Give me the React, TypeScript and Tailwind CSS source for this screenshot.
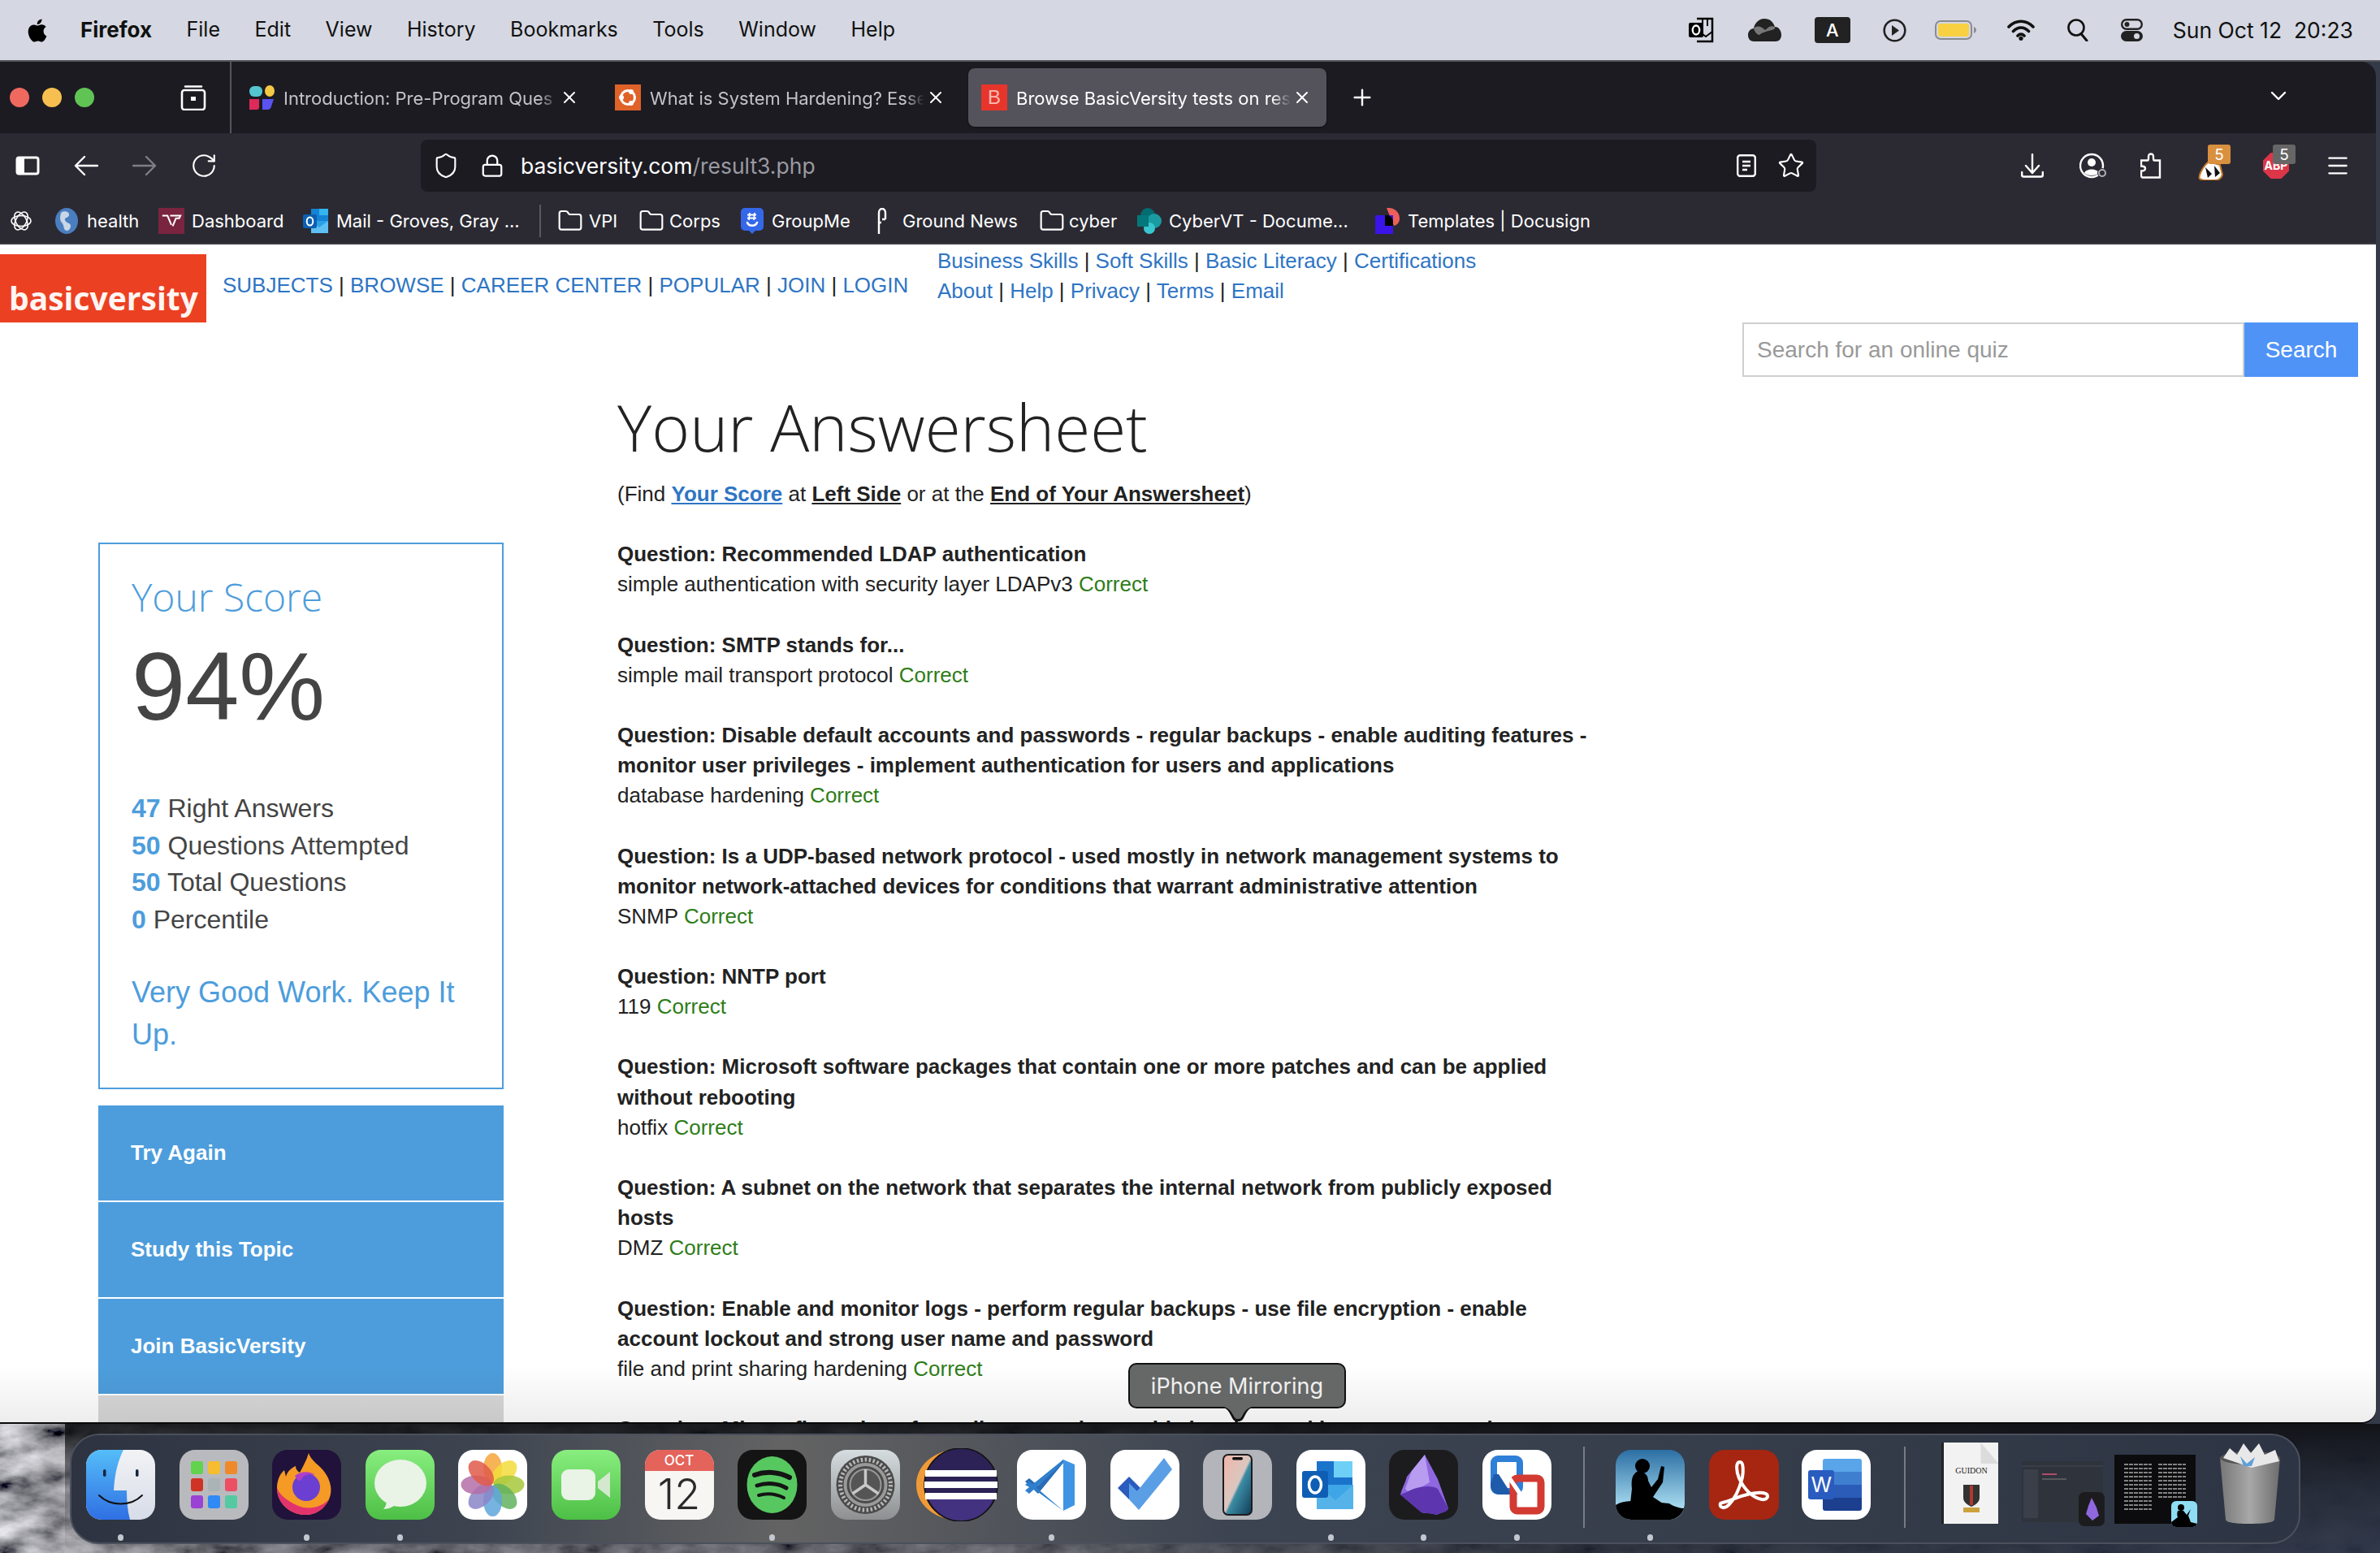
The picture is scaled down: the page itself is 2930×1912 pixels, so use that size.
import React from "react";
import { Shield, Lock, Star, Plus, X, ChevronDown, Folder, Menu, RotateCw } from "lucide-react";

const questions: [string, string][] = [
  ["Question: Recommended LDAP authentication", "simple authentication with security layer LDAPv3"],
  ["Question: SMTP stands for...", "simple mail transport protocol"],
  ["Question: Disable default accounts and passwords - regular backups - enable auditing features - monitor user privileges - implement authentication for users and applications", "database hardening"],
  ["Question: Is a UDP-based network protocol - used mostly in network management systems to monitor network-attached devices for conditions that warrant administrative attention", "SNMP"],
  ["Question: NNTP port", "119"],
  ["Question: Microsoft software packages that contain one or more patches and can be applied without rebooting", "hotfix"],
  ["Question: A subnet on the network that separates the internal network from publicly exposed hosts", "DMZ"],
  ["Question: Enable and monitor logs - perform regular backups - use file encryption - enable account lockout and strong user name and password", "file and print sharing hardening"],
];

function Sep() {
  return <span className="text-[#222]"> | </span>;
}
function L({ children }: { children: React.ReactNode }) {
  return <a className="text-[#2e75c4]">{children}</a>;
}

function MenuBar() {
  return (
    <div className="h-[76px] shrink-0 bg-[#d5d8e2] border-b-2 border-b-[#55565c] flex items-center text-[#111] font-['Inter',sans-serif] text-[25px]">
      <svg viewBox="0 0 26 31" className="ml-[32px] w-[26px] h-[31px] mr-[41px]"><path fill="#000" d="M21.6 16.4c0-3.5 2.9-5.2 3-5.3-1.6-2.4-4.2-2.7-5-2.8-2.2-.2-4.2 1.3-5.3 1.3-1.1 0-2.8-1.3-4.6-1.2-2.4 0-4.6 1.4-5.8 3.500-2.500 4.300-.6 10.700 1.800 14.200 1.200 1.700 2.600 3.600 4.400 3.500 1.800-.1 2.400-1.100 4.600-1.100 2.100 0 2.700 1.100 4.600 1.100 1.900 0 3.100-1.700 4.200-3.400 1.300-2 1.900-3.900 1.900-4-.1 0-3.800-1.400-3.800-5.800zM18 5.900c1-1.200 1.600-2.800 1.500-4.500-1.400.1-3.200 1-4.200 2.200-.9 1-1.700 2.700-1.500 4.300 1.600.1 3.200-.8 4.200-2z"/></svg>
      <div className="flex gap-[42.500px] leading-none">
        <span className="font-bold text-[26px]">Firefox</span>
        <span>File</span><span>Edit</span><span>View</span><span>History</span><span>Bookmarks</span><span>Tools</span><span>Window</span><span>Help</span>
      </div>
      <div className="ml-auto mr-[33px] flex items-center">
        <svg viewBox="0 0 32 32" className="w-[32px] h-[32px]"><path d="M11 2h19v28H11" fill="none" stroke="#000" strokeWidth="2.500"/><path d="M14 18l8 6 8-6M18 3v8M24 3v8" fill="none" stroke="#000" strokeWidth="2"/><rect x="1" y="7" width="18" height="18" rx="2" fill="#000"/><ellipse cx="10" cy="16" rx="4.200" ry="5.500" fill="none" stroke="#fff" strokeWidth="2.400"/></svg>
        <svg viewBox="0 0 41 28" className="ml-[42px] w-[41px] h-[28px]"><path d="M7 28C2 28 0 24 0 20s3-8 7-8c1-6 6-12 13-12s11 4 13 10c5 0 8 5 8 10 0 5-3 8-7 8z" fill="#222"/><path d="M7 12c4-5 10-2 14 2l5-4c2-1 5-1 7 0 1 1-1 4-4 4-7 2-12 3-15 6-3 0-6-4-7-8z" fill="#777"/></svg>
        <div className="ml-[41px] w-[44px] h-[32px] rounded-[4px] bg-[#222] text-white flex items-center justify-center text-[22px] font-medium leading-none">A</div>
        <svg viewBox="0 0 29 29" className="ml-[40px] w-[29px] h-[29px]"><circle cx="14.500" cy="14.500" r="12.800" fill="none" stroke="#222" strokeWidth="2.600"/><path d="M11 8l9 6.500-9 6.500z" fill="#222"/></svg>
        <svg viewBox="0 0 51 24" className="ml-[35px] w-[51px] h-[24px]"><rect x="1" y="1" width="44" height="22" rx="6" fill="none" stroke="#8a8b90" strokeWidth="2"/><rect x="4" y="4" width="38" height="16" rx="3.500" fill="#f8d041"/><path d="M48 8c2 1 3 2.500 3 4s-1 3-3 4z" fill="#8a8b90"/></svg>
        <svg viewBox="0 0 34 26" className="ml-[38px] w-[34px] h-[26px]"><path d="M2 9c9-9 21-9 30 0M7.500 14.500c6-6 13-6 19 0M13 20c2.500-2.500 5.500-2.500 8 0" fill="none" stroke="#111" strokeWidth="3.600" strokeLinecap="round"/><circle cx="17" cy="23.300" r="2.600" fill="#111"/></svg>
        <svg viewBox="0 0 26 28" className="ml-[40px] w-[26px] h-[28px]"><circle cx="11" cy="11" r="9.500" fill="none" stroke="#111" strokeWidth="2.600"/><path d="M17 18.500l7 8.500" stroke="#111" strokeWidth="3" strokeLinecap="round"/></svg>
        <svg viewBox="0 0 27 28" className="ml-[40px] w-[27px] h-[28px]"><rect x="1.200" y="1.200" width="24.600" height="11.500" rx="5.700" fill="none" stroke="#222" strokeWidth="2.400"/><circle cx="7.500" cy="7" r="3" fill="#222"/><rect x="0" y="15" width="27" height="13" rx="6.500" fill="#222"/><circle cx="19.500" cy="21.500" r="3.500" fill="#d5d8e2"/></svg>
        <span className="ml-[37px] whitespace-pre text-[26.500px] leading-none">Sun Oct 12  20:23</span>
      </div>
    </div>
  );
}

function Tab({ label, icon, active }: { label: string; icon: React.ReactNode; active?: boolean }) {
  return (
    <div className={active ? "w-[441px] h-[72px] rounded-[8px] bg-[#54525b] shadow-[0_1px_3px_rgba(0,0,0,0.5)] flex items-center pl-[16px]" : "w-[441px] h-[72px] rounded-[8px] flex items-center pl-[16px]"}>
      <div className="w-[32px] h-[32px] shrink-0">{icon}</div>
      <span className={active ? "ml-[11px] mt-[2px] w-[338px] overflow-hidden whitespace-nowrap text-[22px] text-white [mask-image:linear-gradient(to_right,black_93%,transparent)]" : "ml-[11px] mt-[2px] w-[338px] overflow-hidden whitespace-nowrap text-[22px] text-[#c2c2c8] [mask-image:linear-gradient(to_right,black_93%,transparent)]"}>{label}</span>
      <X size={24} strokeWidth={2} className="ml-[2px] text-white shrink-0" />
    </div>
  );
}

function TabBar() {
  return (
    <div className="h-[88px] shrink-0 bg-[#1c1b22] flex items-center font-['Inter',sans-serif]">
      <div className="ml-[12px] w-[24px] h-[24px] rounded-full bg-[#f0695f]" />
      <div className="ml-[16px] w-[24px] h-[24px] rounded-full bg-[#f6bf4f]" />
      <div className="ml-[16px] w-[24px] h-[24px] rounded-full bg-[#60c454]" />
      <svg viewBox="0 0 32 32" className="ml-[106px] w-[32px] h-[32px]"><path d="M6 2.500h20" stroke="#fff" strokeWidth="2.400" strokeLinecap="round"/><rect x="2" y="7" width="28" height="24" rx="3" fill="none" stroke="#fff" strokeWidth="2.600"/><rect x="13" y="15" width="6" height="5" fill="#fff"/></svg>
      <div className="ml-[29px] w-[2px] h-[88px] bg-[#55555c]" />
      <div className="ml-[5px] flex gap-[10px]">
        <Tab label="Introduction: Pre-Program Ques" icon={<svg viewBox="0 0 32 32"><rect x="1" y="2" width="16" height="13" rx="6" fill="#54c6d0"/><ellipse cx="26" cy="8" rx="6" ry="7" fill="#f6c945"/><path d="M1 18h12v10a3 3 0 0 1-3 3H1z" fill="#dd2a5b"/><path d="M17 18h14l-3 9a5 5 0 0 1-5 4h-6z" fill="#5a53f2"/></svg>} />
        <Tab label="What is System Hardening? Esse" icon={<svg viewBox="0 0 32 32"><rect width="32" height="32" fill="#df6229"/><circle cx="16" cy="16" r="8.500" fill="none" stroke="#fff" strokeWidth="3"/><circle cx="8" cy="16" r="3" fill="#fff"/><circle cx="20" cy="9" r="3" fill="#fff"/><circle cx="20" cy="23" r="3" fill="#fff"/></svg>} />
        <Tab active label="Browse BasicVersity tests on res" icon={<div className="w-[32px] h-[32px] bg-[#e8352b] text-[#f9b9b2] flex items-center justify-center text-[24px] leading-none font-['Liberation_Sans',sans-serif]">B</div>} />
      </div>
      <Plus size={32} strokeWidth={1.800} className="ml-[28px] text-white" />
      <ChevronDown size={32} strokeWidth={1.800} className="ml-auto mr-[104px] -mt-[4px] text-white" />
    </div>
  );
}

function NavBar() {
  return (
    <div className="h-[80px] shrink-0 bg-[#2b2a33] flex items-center text-white font-['Inter',sans-serif]">
      <svg viewBox="0 0 30 24" className="ml-[19px] w-[30px] h-[24px]"><rect x="2" y="2" width="26" height="20" rx="2.500" fill="none" stroke="#fff" strokeWidth="3"/><rect x="2" y="2" width="9" height="20" fill="#fff"/></svg>
      <svg viewBox="0 0 30 26" className="ml-[42px] w-[30px] h-[26px]"><path d="M29 13H3M13 2L2 13l11 11" fill="none" stroke="#fff" strokeWidth="2.400" strokeLinecap="round" strokeLinejoin="round"/></svg>
      <svg viewBox="0 0 30 26" className="ml-[42px] w-[30px] h-[26px]"><path d="M1 13h26M17 2l11 11-11 11" fill="none" stroke="#7f7e85" strokeWidth="2.400" strokeLinecap="round" strokeLinejoin="round"/></svg>
      <RotateCw size={34} strokeWidth={1.500} className="ml-[41px]" />
      <div className="ml-[250px] w-[1718px] h-[64px] rounded-[8px] bg-[#1c1b22] flex items-center">
        <Shield size={34} strokeWidth={1.500} className="ml-[14px]" />
        <Lock size={30} strokeWidth={1.800} className="ml-[25px]" />
        <span className="ml-[20px] mt-[1px] text-[26.500px] leading-none"><span>basicversity.com</span><span className="text-[#9a9aa0]">/result3.php</span></span>
        <svg viewBox="0 0 24 28" className="ml-auto w-[24px] h-[28px]"><rect x="1.200" y="1.200" width="21.600" height="25.600" rx="3" fill="none" stroke="#fff" strokeWidth="2.400"/><path d="M7 9h10M7 14h10M7 19h6" stroke="#fff" strokeWidth="2.400"/></svg>
        <Star size={34} strokeWidth={1.500} className="ml-[26px] mr-[14px]" />
      </div>
      <svg viewBox="0 0 28 30" className="ml-[252px] w-[28px] h-[30px]"><path d="M14 1v23M6 15l8 9 8-9M1.200 23v3.500a2 2 0 0 0 2 2h21.600a2 2 0 0 0 2-2V23" fill="none" stroke="#fff" strokeWidth="2.400" strokeLinecap="round" strokeLinejoin="round"/></svg>
      <svg viewBox="0 0 34 32" className="ml-[44px] w-[34px] h-[32px]"><circle cx="15" cy="16" r="14" fill="none" stroke="#fff" strokeWidth="2.400"/><circle cx="15" cy="12" r="5" fill="#fff"/><path d="M6 25c2-6 16-6 18 0-4 4-14 4-18 0z" fill="#fff"/><circle cx="28" cy="25" r="6" fill="#2b2a33"/><circle cx="28" cy="25" r="4" fill="none" stroke="#b0b0b5" strokeWidth="2"/></svg>
      <svg viewBox="0 0 26 32" className="ml-[41px] w-[26px] h-[32px]"><path d="M13 1.500c3 0 3 2 3 5 0 2 0 3 1 3h7v21H3c-1 0-2-1-2-2v-6c3 0 5-1 5-3s-2-3-5-3v-7h8c1 0 1-1 1-3 0-3 0-5 3-5z" fill="none" stroke="#fff" strokeWidth="2.400"/></svg>
      <div className="ml-[45px] relative w-[32px] h-[32px]">
        <svg viewBox="0 0 32 26" className="absolute top-[8px] left-0 w-[32px] h-[26px]"><path d="M2 24c-2-3 3-12 7-17l4-4 14 4 3 12c-1 3-4 7-10 7-6 0-14 1-18-2z" fill="#fff" stroke="#c47a28" strokeWidth="2"/><path d="M9 10l8 8-5 5z" fill="#111"/><path d="M20 8l7 9-6 5z" fill="#111"/></svg>
        <div className="absolute -top-[10px] left-[12px] w-[28px] h-[24px] rounded-[3px] bg-[#d9903f] text-white flex items-center justify-center text-[19px] leading-none">5</div>
      </div>
      <div className="ml-[48px] relative w-[32px] h-[32px]">
        <div className="absolute inset-0 bg-[#dc3648] [clip-path:polygon(30%_0,70%_0,100%_30%,100%_70%,70%_100%,30%_100%,0_70%,0_30%)] flex items-center justify-center text-[14px] font-bold leading-none text-white">ABP</div>
        <div className="absolute -top-[10px] left-[12px] w-[28px] h-[24px] rounded-[3px] bg-[#666] text-white flex items-center justify-center text-[19px] leading-none">5</div>
      </div>
      <Menu size={32} strokeWidth={1.700} className="ml-[44px]" />
    </div>
  );
}

function FolderIcon() {
  return <Folder size={32} strokeWidth={1.600} className="text-white shrink-0" />;
}

function OutlookMini() {
  return (
    <svg viewBox="0 0 32 32" className="w-[32px] h-[32px] shrink-0"><rect x="10" y="1" width="21" height="16" fill="#1583d6"/><rect x="20" y="1" width="11" height="8" fill="#36b4f0"/><path d="M10 16h21v15H10z" fill="#2aa0e8"/><path d="M10 16l10 8 11-8v15H10z" fill="#5ec0f2"/><rect x="0" y="8" width="17" height="17" rx="2" fill="#0b5fb3"/><ellipse cx="8.500" cy="16.500" rx="3.800" ry="5" fill="none" stroke="#fff" strokeWidth="2"/></svg>
  );
}

function Bookmarks() {
  return (
    <div className="h-[57px] shrink-0 bg-[#2b2a33] border-b-2 border-b-[#3c3b44] flex items-center text-white text-[22px] font-['Inter',sans-serif] leading-none whitespace-nowrap">
      <svg viewBox="0 0 26 30" className="ml-[13px] w-[26px] h-[30px] shrink-0"><g fill="none" stroke="#fff" strokeWidth="1.500"><ellipse cx="13" cy="15" rx="12" ry="6.500" /><ellipse cx="13" cy="15" rx="12" ry="6.500" transform="rotate(60 13 15)" /><ellipse cx="13" cy="15" rx="12" ry="6.500" transform="rotate(120 13 15)" /></g></svg>
      <svg viewBox="0 0 28 32" className="ml-[29px] w-[28px] h-[32px] shrink-0"><ellipse cx="14" cy="16" rx="14" ry="16" fill="#4a7ec0"/><path d="M8 5c4-2 10 0 9 4s-6 2-5 6 8 3 7 8-5 6-7 4-1-6-4-9-2-11 0-13z" fill="#c9d6e6"/></svg>
      <span className="ml-[11px] w-[88px]">health</span>
      <div className="w-[32px] h-[32px] bg-[#7a2440] shrink-0 flex items-center justify-center"><svg viewBox="0 0 32 20" className="w-[26px] h-[16px]"><path d="M2 2h8l6 14M14 2h16l-2 4h-5l-5 12" fill="none" stroke="#fff" strokeWidth="2.500"/></svg></div>
      <span className="ml-[9px] w-[137px]">Dashboard</span>
      <OutlookMini />
      <span className="ml-[9px] w-[250px]">Mail - Groves, Gray ...</span>
      <div className="w-[2px] h-[40px] bg-[#5a5961] shrink-0" />
      <div className="ml-[20px] flex items-center w-[100px]"><FolderIcon /><span className="ml-[7px]">VPI</span></div>
      <div className="flex items-center w-[126px]"><FolderIcon /><span className="ml-[6px]">Corps</span></div>
      <svg viewBox="0 0 28 32" className="w-[28px] h-[32px] shrink-0"><path d="M5 0h18a5 5 0 0 1 5 5v18a5 5 0 0 1-5 5h-5l-4 4-4-4H5a5 5 0 0 1-5-5V5a5 5 0 0 1 5-5z" fill="#3568e8"/><path d="M8 18c2 5 10 5 12 0" fill="none" stroke="#fff" strokeWidth="2.600" strokeLinecap="round"/><path d="M11 6l-1 9M17 6l-1 9M8 8.500h11M8 12.500h11" stroke="#fff" strokeWidth="1.800"/></svg>
      <span className="ml-[10px] w-[130px]">GroupMe</span>
      <svg viewBox="0 0 12 32" className="w-[12px] h-[32px] shrink-0"><path d="M2 32V6c0-3 2-5 4-5s4 2 4 5v8M6 14h4M2 18h3" fill="none" stroke="#fff" strokeWidth="2.400"/></svg>
      <span className="ml-[19px] w-[168px]">Ground News</span>
      <div className="flex items-center w-[121px]"><FolderIcon /><span className="ml-[5px]">cyber</span></div>
      <svg viewBox="0 0 30 32" className="w-[30px] h-[32px] shrink-0"><circle cx="13" cy="9" r="9" fill="#036c70"/><circle cx="21" cy="16" r="9" fill="#1a9ba1"/><circle cx="15" cy="25" r="7" fill="#37c6d0"/><rect x="0" y="9" width="14" height="14" fill="#04777b"/></svg>
      <span className="ml-[9px] w-[254px]">CyberVT - Docume...</span>
      <svg viewBox="0 0 32 32" className="w-[32px] h-[32px] shrink-0"><path d="M14 0h3a13 13 0 0 1 13 13c0 5-3 8-7 9L14 0z" fill="#ee5f5b"/><rect x="0" y="9" width="22" height="23" fill="#3a14e8"/><path d="M12 9h4a9 9 0 0 1 6 8v5H12z" fill="#000"/></svg>
      <span className="ml-[8px]">Templates | Docusign</span>
    </div>
  );
}

function Page() {
  return (
    <div className="relative flex-1 min-h-0 bg-white overflow-hidden font-['Liberation_Sans',sans-serif] text-[26px] leading-[37.140px] text-[#222]">
      <div className="h-[96px] flex items-start">
        <div className="mt-[12px] w-[254px] h-[84px] bg-[#ec4023] flex items-end pl-[11px] pb-[2px] font-['Open_Sans',sans-serif] font-bold text-[39px] leading-[56px] text-[#fff5f2]">basicversity</div>
        <div className="ml-[20px] mt-[32px] w-[880px] whitespace-nowrap"><L>SUBJECTS</L><Sep /><L>BROWSE</L><Sep /><L>CAREER CENTER</L><Sep /><L>POPULAR</L><Sep /><L>JOIN</L><Sep /><L>LOGIN</L></div>
        <div className="mt-[2px] whitespace-nowrap">
          <div><L>Business Skills</L><Sep /><L>Soft Skills</L><Sep /><L>Basic Literacy</L><Sep /><L>Certifications</L></div>
          <div><L>About</L><Sep /><L>Help</L><Sep /><L>Privacy</L><Sep /><L>Terms</L><Sep /><L>Email</L></div>
        </div>
      </div>
      <div className="h-[67px] flex justify-end pr-[22px]">
        <input readOnly placeholder="Search for an online quiz" className="w-[618px] h-[67px] border-2 border-[#cfcfcf] pl-[16px] text-[28px] placeholder:text-[#999] outline-none" />
        <div className="w-[140px] h-[67px] bg-[#4f93f7] text-white text-[28px] flex items-center justify-center">Search</div>
      </div>
      <div className="flex">
        <div className="ml-[121px] mt-[204px] w-[499px] shrink-0">
          <div className="h-[673px] border-2 border-[#4d9ddc] pl-[39px]">
            <div className="mt-[30px] font-['Open_Sans',sans-serif] font-light text-[48px] leading-[70px] text-[#4d9ddc]">Your Score</div>
            <div className="mt-[10px] text-[119px] leading-[130px] text-[#444]">94%</div>
            <div className="mt-[63px] text-[32px] leading-[45.700px] text-[#444]">
              <div><b className="text-[#4d9ddc]">47</b> Right Answers</div>
              <div><b className="text-[#4d9ddc]">50</b> Questions Attempted</div>
              <div><b className="text-[#4d9ddc]">50</b> Total Questions</div>
              <div><b className="text-[#4d9ddc]">0</b> Percentile</div>
            </div>
            <div className="mt-[40px] pr-[20px] text-[36px] leading-[52px] text-[#4d9ddc]">Very Good Work. Keep It Up.</div>
          </div>
          <div className="mt-[20px] h-[117px] bg-[#4d9ddc] pl-[40px] flex items-center font-bold text-white">Try Again</div>
          <div className="mt-[2px] h-[117px] bg-[#4d9ddc] pl-[40px] flex items-center font-bold text-white">Study this Topic</div>
          <div className="mt-[2px] h-[117px] bg-[#4d9ddc] pl-[40px] flex items-center font-bold text-white">Join BasicVersity</div>
          <div className="mt-[2px] h-[117px] bg-[#d8d8d8]" />
        </div>
        <div className="ml-[140px] w-[1215px]">
          <h1 className="mt-[11px] font-['Open_Sans',sans-serif] font-light text-[80px] leading-[100px] text-[#222]">Your Answersheet</h1>
          <p className="mt-[15px]">(Find <a className="font-bold underline text-[#2e75c4]">Your Score</a> at <a className="font-bold underline">Left Side</a> or at the <a className="font-bold underline">End of Your Answersheet</a>)</p>
          <div className="mt-[37px]">
            {questions.map(([q, a]) => (
              <div key={q} className="mb-[37.140px]">
                <div className="font-bold">{q}</div>
                <div>{a} <span className="text-[#2e7d18]">Correct</span></div>
              </div>
            ))}
            <div className="font-bold">Question: Misconfiguration of e-mail servers that enable it to be used by spammers to host</div>
          </div>
        </div>
      </div>
      <div className="absolute left-0 right-0 bottom-0 h-[70px] bg-gradient-to-b from-transparent to-[rgba(0,0,0,0.07)] pointer-events-none" />
    </div>
  );
}

function DockIcon({ children, dot }: { children: React.ReactNode; dot?: boolean }) {
  return (
    <div className="w-[85px] flex flex-col items-center">
      <div className="w-[85px] h-[86px] flex items-center justify-center">{children}</div>
      {dot ? <div className="mt-[18px] w-[7px] h-[8px] rounded-full bg-[#c3c7d0]" /> : null}
    </div>
  );
}

const svgC = "w-[85px] h-[86px] overflow-visible shrink-0";

function Dock() {
  return (
    <div className="relative flex-1 min-h-0">
      <svg className="absolute inset-0 w-full h-full" preserveAspectRatio="none" viewBox="0 0 2930 158">
        <defs>
          <filter id="rock" x="0" y="0" width="100%" height="100%">
            <feTurbulence type="fractalNoise" baseFrequency="0.018 0.035" numOctaves="5" seed="11" />
            <feColorMatrix values="1.300 0 0 0 -0.250  1.300 0 0 0 -0.250  1.350 0 0 0 -0.240  0 0 0 0 1" />
          </filter>
          <linearGradient id="tone" x1="0" x2="1" y1="0" y2="0">
            <stop offset="0" stopColor="#000" stopOpacity="0" />
            <stop offset="0.03" stopColor="#000" stopOpacity="0.15" />
            <stop offset="0.1" stopColor="#11131a" stopOpacity="0.4" />
            <stop offset="0.4" stopColor="#15181f" stopOpacity="0.5" />
            <stop offset="0.65" stopColor="#1a1f2b" stopOpacity="0.85" />
            <stop offset="1" stopColor="#2b3345" stopOpacity="0.95" />
          </linearGradient>
          <linearGradient id="top" x1="0" x2="0" y1="0" y2="1">
            <stop offset="0" stopColor="#0c0d10" stopOpacity="0.85" />
            <stop offset="0.5" stopColor="#0c0d10" stopOpacity="0.3" />
            <stop offset="1" stopColor="#0c0d10" stopOpacity="0" />
          </linearGradient>
        </defs>
        <rect width="2930" height="158" filter="url(#rock)" />
        <rect width="2930" height="158" fill="url(#tone)" />
        <rect x="80" width="2850" height="158" fill="url(#top)" />
      </svg>
      <div className="relative ml-[86px] mt-[12px] w-[2746px] h-[136px] rounded-[36px] border-2 border-[#4b505c] bg-[linear-gradient(to_right,#2d3340,#3d4450_18%,#636363_32%,#3d4451_52%,#2d3544)] flex items-start pl-[18px] pt-[18px] gap-[29.600px]">
        <DockIcon dot>
          <svg viewBox="0 0 85 86" className={svgC}><defs><linearGradient id="fa" x1="0" y1="0" x2="0" y2="1"><stop offset="0" stopColor="#55bdf8"/><stop offset="1" stopColor="#2f6fe3"/></linearGradient><linearGradient id="fb" x1="0" y1="0" x2="0" y2="1"><stop offset="0" stopColor="#f2f3f5"/><stop offset="1" stopColor="#d7dce8"/></linearGradient></defs><rect width="85" height="86" rx="19" fill="url(#fb)"/><path d="M19 0h27c-7 14-11 30-12 50h16c0 13 1 25 4 36H19A19 19 0 0 1 0 67V19A19 19 0 0 1 19 0z" fill="url(#fa)"/><rect x="21" y="24" width="3.500" height="9" rx="1.700" fill="#16253f"/><rect x="61" y="24" width="3.500" height="9" rx="1.700" fill="#16253f"/><path d="M16 56c14 14 39 14 53 0" fill="none" stroke="#111" strokeWidth="2" strokeLinecap="round"/></svg>
        </DockIcon>
        <DockIcon>
          <svg viewBox="0 0 85 86" className={svgC}><rect width="85" height="86" rx="19" fill="#b9babe"/>{[["#62d24f",14,14],["#f5bd2f",35,14],["#ef8a2a",56,14],["#cf3325",14,35],["#aab3b5",35,35],["#ec4f63",56,35],["#9a42d4",14,56],["#2f8af5",35,56],["#55c9a2",56,56]].map(([c,x,y]) => <rect key={String(c)} x={Number(x)} y={Number(y)} width="15" height="16" rx="3" fill={String(c)} />)}</svg>
        </DockIcon>
        <DockIcon dot>
          <svg viewBox="0 0 85 86" className={svgC}><rect width="85" height="86" rx="19" fill="#20123a"/><path d="M45 4c3 10 14 15 20 24 7 10 10 22 5 33-6 13-18 20-31 19C22 79 6 66 6 47c0-10 4-18 9-22l2 8c2-7 7-11 12-13 0 4 2 6 5 8 3-6 8-14 11-24z" fill="#f59a25"/><path d="M6 47c0 19 16 32 33 33 13 1 25-6 31-19-10 10-26 14-40 7C17 62 9 55 6 47z" fill="#e2336e"/><circle cx="42" cy="46" r="17" fill="#6a3fd2"/><path d="M28 32c8-6 18-6 25-1-8-2-14 0-17 5-2 4-5 2-8-4z" fill="#b03fc7"/></svg>
        </DockIcon>
        <DockIcon dot>
          <svg viewBox="0 0 85 86" className={svgC}><defs><linearGradient id="gr" x1="0" y1="0" x2="0" y2="1"><stop offset="0" stopColor="#88ee7f"/><stop offset="1" stopColor="#4dbf45"/></linearGradient></defs><rect width="85" height="86" rx="19" fill="url(#gr)"/><ellipse cx="43" cy="41" rx="32" ry="29" fill="#e9f3e6"/><path d="M26 62c0 5-2 9-4 11 6 0 12-3 16-6z" fill="#e9f3e6"/></svg>
        </DockIcon>
        <DockIcon>
          <svg viewBox="0 0 85 86" className={svgC}><rect width="85" height="86" rx="19" fill="#fff"/>{[["#f4a63a",0],["#f3dc3b",45],["#a8c83c",90],["#61b25e",135],["#5fa6dc",180],["#8a86c8",225],["#b46fa8",270],["#e05a4a",315]].map(([c,r]) => <ellipse key={String(r)} cx="42.500" cy="23" rx="11.500" ry="19" fill={String(c)} fillOpacity="0.85" transform={`rotate(${r} 42.500 43)`} />)}</svg>
        </DockIcon>
        <DockIcon>
          <svg viewBox="0 0 85 86" className={svgC}><rect width="85" height="86" rx="19" fill="url(#gr)"/><rect x="12" y="24" width="42" height="38" rx="9" fill="#e9f3e6"/><path d="M57 39l15-12v32L57 47z" fill="#d3e8cf"/></svg>
        </DockIcon>
        <DockIcon>
          <div className="w-[85px] h-[86px] rounded-[19px] bg-[#f7f6f3] overflow-hidden flex flex-col items-center font-['Inter',sans-serif]">
            <div className="w-full h-[26px] bg-[#e4635a] text-white text-[17px] font-medium leading-[26px] text-center">OCT</div>
            <div className="text-[#2a2a2a] text-[52px] font-light leading-[58px]">12</div>
          </div>
        </DockIcon>
        <DockIcon dot>
          <svg viewBox="0 0 85 86" className={svgC}><rect width="85" height="86" rx="19" fill="#141414"/><ellipse cx="42.500" cy="43" rx="31" ry="35" fill="#57c860"/><g fill="none" stroke="#141414" strokeLinecap="round"><path d="M21 31c14-5 30-4 43 3" strokeWidth="6"/><path d="M24 44c12-4 26-3 36 3" strokeWidth="5"/><path d="M26 56c10-3 21-2 31 3" strokeWidth="4"/></g></svg>
        </DockIcon>
        <DockIcon>
          <svg viewBox="0 0 85 86" className={svgC}><defs><linearGradient id="sg" x1="0" y1="0" x2="0" y2="1"><stop offset="0" stopColor="#d6dde0"/><stop offset="1" stopColor="#8d8f90"/></linearGradient></defs><rect width="85" height="86" rx="19" fill="url(#sg)"/><circle cx="42.500" cy="43" r="36" fill="#4a4a4a"/><circle cx="42.500" cy="43" r="31" fill="none" stroke="#b5b5b5" strokeWidth="5" strokeDasharray="2.500 2.500"/><circle cx="42.500" cy="43" r="25" fill="none" stroke="#999" strokeWidth="4"/><circle cx="42.500" cy="43" r="19" fill="#555" stroke="#999" strokeWidth="2"/><path d="M42.500 43V24M42.500 43l-16 11M42.500 43l16 11" stroke="#c9c9c9" strokeWidth="3.500"/></svg>
        </DockIcon>
        <DockIcon>
          <svg viewBox="0 0 103 90" className="w-[103px] h-[90px] shrink-0"><path d="M48 1C20 4 0 22 0 45s20 41 48 44C25 85 10 68 10 45S25 5 48 1z" fill="#f09a37"/><circle cx="55" cy="45" r="45" fill="#2c2255" stroke="#111" strokeWidth="1.500"/><path d="M15 62h80c-6 16-22 27-40 27s-33-11-40-27z" fill="#43327f"/><rect x="11" y="27" width="88" height="8" fill="#fff"/><rect x="10" y="41" width="90" height="8" fill="#fff"/><rect x="11" y="55" width="88" height="8" fill="#fff"/></svg>
        </DockIcon>
        <DockIcon dot>
          <svg viewBox="0 0 85 86" className={svgC}><rect width="85" height="86" rx="19" fill="#fff"/><path d="M57 12l14 6v50l-14 7z" fill="#3f94e4"/><path d="M57 12L26 44 15 35l-5 4 16 15 31-38z" fill="#2a6cb5"/><path d="M10 50l5 4 42-38v-4zM57 75L15 39l-5 4 16 9 31 23z" fill="#2f7fcc"/></svg>
        </DockIcon>
        <DockIcon>
          <svg viewBox="0 0 85 86" className={svgC}><rect width="85" height="86" rx="19" fill="#fff"/><path d="M9 47l14-14 14 14-14 14z" fill="#2a5bbd"/><path d="M23 61l12 13 41-50-10-14-33 41-10-10z" fill="#5a9fe6"/></svg>
        </DockIcon>
        <DockIcon>
          <svg viewBox="0 0 85 86" className={svgC}><defs><linearGradient id="ph" x1="0" y1="0" x2="1" y2="1"><stop offset="0" stopColor="#f2b5a8"/><stop offset="0.5" stopColor="#d9c7c0"/><stop offset="0.55" stopColor="#3d8ca5"/><stop offset="1" stopColor="#0e3a55"/></linearGradient></defs><rect width="85" height="86" rx="19" fill="#b3b5ba"/><rect x="25" y="6" width="35" height="74" rx="6" fill="url(#ph)" stroke="#1c1c1e" strokeWidth="2"/><rect x="36" y="9" width="13" height="3.500" rx="1.700" fill="#111"/></svg>
        </DockIcon>
        <DockIcon dot>
          <svg viewBox="0 0 85 86" className={svgC}><rect width="85" height="86" rx="19" fill="#fff"/><rect x="25" y="14" width="44" height="33" fill="#1a74cc"/><rect x="46" y="14" width="23" height="20" fill="#6fd0f7"/><path d="M25 43h45v30H25z" fill="#3ea6e6"/><path d="M25 43l23 19 22-19v30H25z" fill="#55b3ea"/><rect x="7" y="26" width="32" height="33" rx="3" fill="#0f5eb5"/><ellipse cx="23" cy="43" rx="7.500" ry="10" fill="none" stroke="#fff" strokeWidth="3.500"/></svg>
        </DockIcon>
        <DockIcon dot>
          <svg viewBox="0 0 85 86" className={svgC}><rect width="85" height="86" rx="19" fill="#1c1c1e"/><path d="M44 6L60 36l13 36c-1 4-10 6-15 8-7-3-14-1-18-3L14 55c2-8 6-14 8-22z" fill="#8f68e0"/><path d="M44 6l6 34-24 14-6-6 8-22z" fill="#b79cf0"/><path d="M22 52c10-6 28-10 38-4l13 24c-1 4-10 6-15 8-7-3-14-1-18-3L14 55z" fill="#5d35ae"/></svg>
        </DockIcon>
        <DockIcon dot>
          <svg viewBox="0 0 85 86" className={svgC}><rect width="85" height="86" rx="19" fill="#fff"/><rect x="14" y="11" width="32" height="40" rx="5" fill="none" stroke="#2f7fd8" strokeWidth="8"/><path d="M10 42c0 8 4 13 12 13h14L20 30h-6z" fill="#1f5bab"/><rect x="38" y="35" width="34" height="40" rx="5" fill="none" stroke="#d33a32" strokeWidth="9"/><path d="M28 27l23 34" stroke="#fff" strokeWidth="5"/></svg>
        </DockIcon>
        <div className="w-[2px] h-[100px] -mt-[4px] mx-[9px] bg-[#777b84]" />
        <DockIcon dot>
          <svg viewBox="0 0 85 86" className={svgC}><defs><linearGradient id="kd" x1="0" y1="0" x2="0" y2="1"><stop offset="0" stopColor="#2c6fa4"/><stop offset="1" stopColor="#c2f2ff"/></linearGradient></defs><rect width="85" height="86" rx="19" fill="url(#kd)"/><circle cx="33" cy="20" r="9" fill="#000"/><path d="M26 27c8-1 14 3 14 11l4 8 8-10 4-16 4 1-2 19-12 18 18 12-24 2-22-6 2-18c-1-10 0-17 6-21z" fill="#000"/><path d="M0 68c10-6 18-4 24-6l42 4c6 4 14 6 19 6v-5a19 19 0 0 1 0 0c0 10-9 19-19 19H19A19 19 0 0 1 0 67z" fill="#000"/></svg>
        </DockIcon>
        <DockIcon>
          <svg viewBox="0 0 85 86" className={svgC}><rect width="86" height="86" rx="19" fill="#a62612"/><path d="M14 66c-2 4 4 8 10 2 8-8 14-22 17-34 1-6 2-19-3-19-6 0-4 13-1 20 6 13 16 24 28 26 7 1 9-5 5-7-9-4-30 2-44 8-6 3-10 2-12 4z" fill="none" stroke="#fff" strokeWidth="4"/></svg>
        </DockIcon>
        <DockIcon>
          <div className="w-[85px] h-[86px] shrink-0 rounded-[19px] bg-white flex items-center justify-center relative">
            <div className="ml-[14px] w-[48px] h-[64px] rounded-[3px] overflow-hidden flex flex-col">
              <div className="h-1/4 bg-[#5aa5ea]" /><div className="h-1/4 bg-[#3f7fd0]" /><div className="h-1/4 bg-[#2a5cb8]" /><div className="h-1/4 bg-[#1c3f8f]" />
            </div>
            <div className="absolute left-[8px] top-[25px] w-[32px] h-[36px] rounded-[3px] bg-[#2a5cc0] text-white text-[26px] leading-[36px] text-center font-['Inter',sans-serif]">W</div>
          </div>
        </DockIcon>
        <div className="w-[2px] h-[100px] -mt-[4px] mx-[11px] bg-[#777b84]" />
        <div className="ml-[4px] -mt-[9px] relative w-[70px] h-[100px] shrink-0 bg-[#f2f2f2] border-l-[3px] border-l-[#222] flex flex-col items-center text-[#222] font-['Liberation_Serif',serif] text-[9px] leading-none pt-[30px]">
          <div className="absolute right-0 top-0 w-[22px] h-[26px] bg-[#dcdcdc] [clip-path:polygon(0_0,100%_100%,0_100%)]" />
          <span className="text-[10px]">GUIDON</span>
          <svg viewBox="0 0 24 30" className="mt-[10px] w-[24px] h-[30px]"><path d="M2 2h20v16c0 6-6 9-10 11C8 27 2 24 2 18z" fill="#333"/><rect x="10" y="3" width="4" height="24" fill="#b0392e"/></svg>
          <div className="w-[20px] h-[6px] bg-[#cba23e]" />
        </div>
        <div className="-ml-[1px] mt-[14px] relative w-[100px] h-[75px] shrink-0 bg-[#2e333c]">
          <svg viewBox="0 0 100 75" className="w-[100px] h-[75px]"><path d="M0 6h100" stroke="#454a54" strokeWidth="1"/><rect x="2" y="10" width="18" height="60" fill="#3a3f4a"/><path d="M25 16h18" stroke="#b34a6b" strokeWidth="2"/><path d="M25 22h30" stroke="#666" strokeWidth="1.500"/></svg>
          <div className="absolute -right-[2px] bottom-[-5px] w-[32px] h-[42px] rounded-[7px] bg-[#1c1c1e] flex items-center justify-center"><svg viewBox="0 0 20 30" className="w-[20px] h-[30px]"><path d="M10 1l6 12 3 10-8 6-8-8 3-10z" fill="#8f68e0"/></svg></div>
        </div>
        <div className="mt-[6px] -ml-[16px] relative w-[100px] h-[85px] shrink-0 bg-[#0c0c0e]">
          <svg viewBox="0 0 100 85" className="w-[100px] h-[85px]"><g stroke="#aaa" strokeWidth="1.500" strokeDasharray="5 1"><path d="M12 12h34M12 17h34M12 22h34M12 27h34M12 32h34M12 37h34M12 42h34M12 47h34M12 52h34M12 57h34M12 62h34M12 67h34"/><path d="M54 12h34M54 17h34M54 22h34M54 27h34M54 32h34M54 37h34M54 42h34M54 47h34M54 52h34"/></g></svg>
          <div className="absolute right-[-2px] bottom-[-4px] w-[32px] h-[32px] rounded-[6px] bg-[#8fdcf5] overflow-hidden"><svg viewBox="0 0 32 32" className="w-[32px] h-[32px]"><circle cx="12" cy="8" r="4" fill="#000"/><path d="M8 12c-1 3-1 6 0 8L0 26v6h32v-4l-8-2-3-8 3-8-5 7-4-5z" fill="#000"/></svg></div>
        </div>
        <svg viewBox="0 0 76 100" className="w-[76px] h-[100px] -mt-[8px] shrink-0"><defs><linearGradient id="tr" x1="0" x2="1"><stop offset="0" stopColor="#777"/><stop offset="0.5" stopColor="#a8a8a8"/><stop offset="1" stopColor="#6c6c6c"/></linearGradient></defs><path d="M1 18h74l-7 76c-1 4-15 5-30 5S9 98 8 94z" fill="url(#tr)"/><ellipse cx="38" cy="18" rx="37" ry="8" fill="#555"/><path d="M5 18l8-12 9 8 8-14 9 12 10-12 7 14 13-6 5 14-34 8z" fill="#e8e8e8"/><path d="M26 16l8 9 10-8-4 11h-10z" fill="#5e9fd8"/></svg>
      </div>
    </div>
  );
}

function Tooltip() {
  return (
    <div className="absolute left-[1389px] top-[1678px] w-[268px] h-[56px] rounded-[10px] bg-[#666867] border-2 border-[#111] flex items-center justify-center font-['Inter',sans-serif] text-[27px] leading-none text-[#efefef]">
      iPhone Mirroring
      <svg viewBox="0 0 40 18" className="absolute top-[52px] left-[113px] w-[40px] h-[18px]"><path d="M0 0h40c-6 2-8 4-11 10-3 6-4 8-9 8s-6-2-9-8C8 4 6 2 0 0z" fill="#111"/><path d="M3 0h34c-5 2-8 4-11 10-2 4-3 5-6 5s-4-1-6-5C11 4 8 2 3 0z" fill="#666867"/></svg>
    </div>
  );
}

export default function App() {
  return (
    <div className="relative w-[2930px] h-[1912px] overflow-hidden flex flex-col bg-[#343a48]">
      <MenuBar />
      <div className="h-[1677px] shrink-0 mr-[5px] rounded-tr-[18px] rounded-br-[18px] overflow-hidden flex flex-col border-b-2 border-b-[#0a0a0a]">
        <TabBar />
        <NavBar />
        <Bookmarks />
        <Page />
      </div>
      <Dock />
      <Tooltip />
    </div>
  );
}
